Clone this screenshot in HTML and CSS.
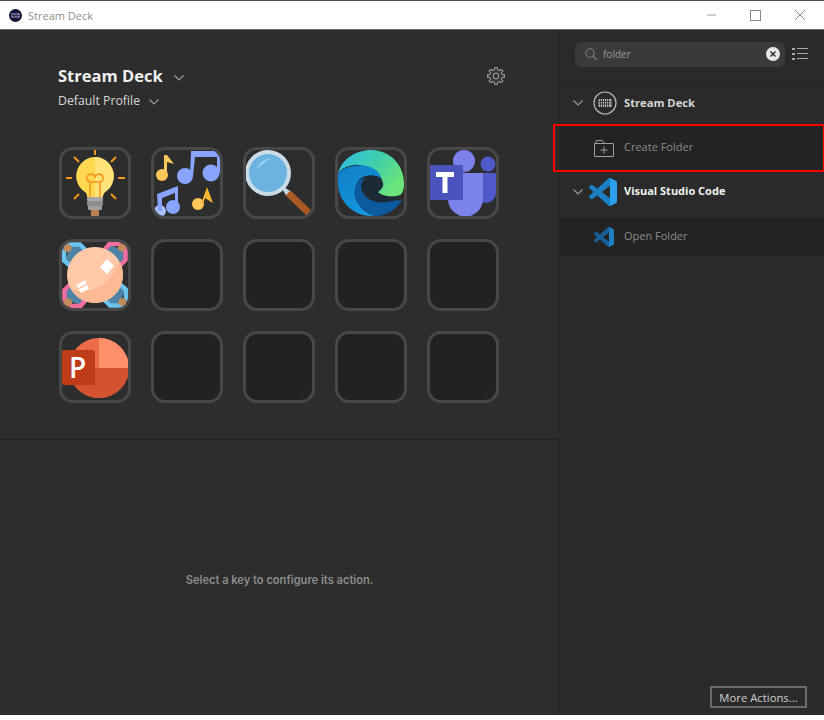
FILE: index.html
```html
<!DOCTYPE html>
<html lang="en">
  <head>
    <meta charset="UTF-8" />
    <title>Stream Deck</title>
    <link rel="stylesheet" href="styles.css">
  </head>
  <body>
    <div class="window">
      <div class="titlebar">
        <svg class="app-logo" width="13" height="13" viewBox="0 0 14 14">
          <circle cx="7" cy="7" r="7" fill="#14143a"/>
          <rect x="2.5" y="4.5" width="9" height="5" fill="#8a8fa8"/>
          <path d="M4.500 4.500v5M6.500 4.500v5M8.500 4.500v5M2.500 7h9" stroke="#14143a" stroke-width=".7"/>
        </svg>
        <span class="title-text">Stream Deck</span>
        <div class="win-btns">
          <svg width="14" height="14" viewBox="0 0 14 14"><path d="M4 7h9" stroke="#9a9a9a"/></svg>
          <svg width="14" height="14" viewBox="0 0 14 14"><rect x="2.5" y="2.5" width="10" height="10" fill="none" stroke="#8a8a8a"/></svg>
          <svg width="14" height="14" viewBox="0 0 14 14"><path d="M2 2l10 10M12 2L2 12" stroke="#8a8a8a"/></svg>
        </div>
      </div>

      <div class="main">
        <div class="left">
          <div class="canvas-area">
            <div class="device-head">
              <div>
                <div class="device-name">Stream Deck
                  <svg class="chev" width="10" height="6" viewBox="0 0 10 6"><path d="M.5 .5L5 5 9.500 .5"/></svg>
                </div>
                <div class="profile-name">Default Profile
                  <svg class="chev" width="10" height="6" viewBox="0 0 10 6"><path d="M.5 .5L5 5 9.500 .5"/></svg>
                </div>
              </div>
              <svg class="gear" width="18" height="18" viewBox="0 0 18 18" fill="none" stroke="#8f8f8f" stroke-width="1.300" stroke-linejoin="round">
                <defs><path id="gearTooth" d="M14.820 6.590L15.140 7.580 17.400 7.670V10.330L15.140 10.420 14.820 11.410"/></defs>
                <use href="#gearTooth"/>
                <use href="#gearTooth" transform="rotate(45 9 9)"/>
                <use href="#gearTooth" transform="rotate(90 9 9)"/>
                <use href="#gearTooth" transform="rotate(135 9 9)"/>
                <use href="#gearTooth" transform="rotate(180 9 9)"/>
                <use href="#gearTooth" transform="rotate(225 9 9)"/>
                <use href="#gearTooth" transform="rotate(270 9 9)"/>
                <use href="#gearTooth" transform="rotate(315 9 9)"/>
                <circle cx="9" cy="9" r="2.800"/>
              </svg>
            </div>

            <div class="keys">
              <!-- lamp -->
              <div class="key">
                <svg viewBox="0 0 66 66">
                  <path d="M33 0v5M12 7l5 5M54 7l-5 5M4 28h6M56 28h7M12 49l5-5M54 49l-5-5" stroke="#f7971e" stroke-width="2"/>
                  <path d="M33 7a19 19 0 0 0-10 35c2 2 2 3 2 5h16c0-2 0-3 2-5a19 19 0 0 0-10-35z" fill="#ffd84f"/>
                  <path d="M33 7a19 19 0 0 1 10 35c-2 2-2 3-2 5h-8z" fill="#ffe27a"/>
                  <path d="M28 47V32a4 4 0 1 1 5-4 4 4 0 1 1 5 4v15M28 32h10" fill="none" stroke="#f7971e" stroke-width="1.600"/>
                  <rect x="25" y="47" width="16" height="4" rx="1" fill="#a8a8a8"/>
                  <rect x="25" y="51" width="16" height="5" rx="1" fill="#8c8c8c"/>
                  <rect x="26" y="56" width="14" height="4" rx="1" fill="#a0a0a0"/>
                  <rect x="29" y="60" width="8" height="6" fill="#b98355"/>
                </svg>
              </div>
              <!-- music -->
              <div class="key">
                <svg viewBox="0 0 66 66">
                  <g fill="#ffc75a">
                    <circle cx="8" cy="25" r="6"/>
                    <path d="M10 5h3l7 9-7-2v13h-3z"/>
                    <circle cx="44" cy="54" r="6"/>
                    <path d="M47 54l6-17 6 16-5-3-3-2-2 6z" fill="#f7b733"/>
                  </g>
                  <g fill="#88a4ff">
                    <circle cx="31" cy="26" r="8"/>
                    <circle cx="57" cy="23" r="8.500"/>
                    <path d="M37 1h29v22h-3V7H41l-2 19h-3z"/>
                    <circle cx="6" cy="61" r="6" fill="#a8c0ff"/>
                    <circle cx="19" cy="57" r="7"/>
                    <path d="M3 44l21-8v20h-3V43L8 48v13H4z"/>
                  </g>
                </svg>
              </div>
              <!-- magnifier -->
              <div class="key">
                <svg viewBox="0 0 66 66">
                  <path d="M39 45l22 21 5-5-22-21z" fill="#a85a22"/>
                  <path d="M36 39l4 6 4-4-6-4z" fill="#c5d8e6"/>
                  <circle cx="22" cy="23" r="21" fill="#6cb3e2" stroke="#c9dce8" stroke-width="4"/>
                  <path d="M11 19c2-6 7-10 14-11-5 3-10 7-14 11z" fill="#a3d2ee"/>
                </svg>
              </div>
              <!-- edge -->
              <div class="key">
                <svg viewBox="0 0 66 66">
                  <defs>
                    <linearGradient id="edgeTop" x1="0" y1="0" x2="1" y2=".6"><stop offset="0" stop-color="#2ebde8"/><stop offset=".55" stop-color="#3fcfa8"/><stop offset="1" stop-color="#6ee57a"/></linearGradient>
                    <linearGradient id="edgeBlue" x1="0" y1="0" x2=".6" y2="1"><stop offset="0" stop-color="#0f7cc4"/><stop offset="1" stop-color="#1599e0"/></linearGradient>
                  </defs>
                  <circle cx="33" cy="33" r="32" fill="#1c2a36"/>
                  <path d="M0 23C4 9 18 0 33 0c19 0 33 15 33 33 0 6-1 10-4 12-5 2-17 2-22-3 3-2 6-5 5-9-2-10-12-17-24-18C13 14 4 18 0 23z" fill="url(#edgeTop)"/>
                  <path d="M0 23c10-9 30-11 40-1 2 2 3 4 3 6-4-3-12-4-18-1-6 3-9 11-8 19 2 9 9 17 20 20h-4C15 66 0 51 0 33c0-3 0-7 0-10z" fill="url(#edgeBlue)"/>
                  <path d="M17 46c-2-10 3-17 11-18-6 4-6 10-3 15 4 7 14 11 24 9 6-1 11-2 15-2-6 10-16 16-27 16C27 63 19 55 17 46z" fill="#0d5a9e"/>
                </svg>
              </div>
              <!-- teams -->
              <div class="key">
                <svg viewBox="0 0 66 66">
                  <circle cx="34" cy="11" r="11" fill="#7b83eb"/>
                  <circle cx="58" cy="14" r="7.500" fill="#5059c9"/>
                  <path d="M50 23h16v20a10 10 0 0 1-14 9z" fill="#5059c9"/>
                  <path d="M18 23h35v26a17.500 17.500 0 0 1-35 0z" fill="#7b83eb"/>
                  <path d="M18 50h15V20H18z" fill="#5c63c8"/>
                  <rect x="0" y="15" width="33" height="35" fill="#4b53bc"/>
                  <path d="M6 22h18v5h-6.500v16h-5V27H6z" fill="#fff"/>
                </svg>
              </div>

              <!-- meeting table -->
              <div class="key">
                <svg viewBox="0 0 66 66">
                  <defs>
                    <g id="person">
                      <path d="M8 5l11-2 9 9-16 15-9-9z" fill="#4f83a6" stroke="none"/>
                      <path d="M4 2.500h14l5 5M2 9v9.500L12 27" fill="none" stroke-width="4.500" stroke-linecap="round" stroke-linejoin="round"/>
                      <circle cx="5.500" cy="6" r="4" fill="#c08a5c" stroke="none"/>
                    </g>
                  </defs>
                  <use href="#person" stroke="#6cc4ef"/>
                  <use href="#person" stroke="#f26da0" transform="rotate(90 33 33)"/>
                  <use href="#person" stroke="#6cc4ef" transform="rotate(180 33 33)"/>
                  <use href="#person" stroke="#f26da0" transform="rotate(270 33 33)"/>
                  <circle cx="33" cy="33" r="28" fill="#ffc9a8"/>
                  <path d="M57 19a28 28 0 0 1-24 42C23 61 14 56 9 47c20 7 42-6 48-28z" fill="#fcb994"/>
                  <path d="M38 25l7-8 7 7-7 8z" fill="#fff"/>
                  <path d="M14 43l9-5 4 9-8 4z" fill="#fff"/>
                  <path d="M16 47l9-5" stroke="#fcb994" stroke-width="1.200"/>
                </svg>
              </div>
              <div class="key empty"></div>
              <div class="key empty"></div>
              <div class="key empty"></div>
              <div class="key empty"></div>

              <!-- powerpoint -->
              <div class="key">
                <svg viewBox="0 0 66 66">
                  <circle cx="37" cy="34" r="30" fill="#ed6c47"/>
                  <path d="M37 4a30 30 0 0 1 30 30H37z" fill="#ff8f6b"/>
                  <path d="M37 34h30a30 30 0 0 1-60 0z" fill="#d35230"/>
                  <rect x="0" y="16" width="33" height="35" rx="2" fill="#c03b18"/>
                  <text x="7" y="44" class="ppt-letter">P</text>
                </svg>
              </div>
              <div class="key empty"></div>
              <div class="key empty"></div>
              <div class="key empty"></div>
              <div class="key empty"></div>
            </div>
          </div>
          <div class="inspector">
            <p class="hint">Select a key to configure its action.</p>
          </div>
        </div>

        <div class="sidebar">
          <div class="search-row">
            <div class="search">
              <svg width="14" height="14" viewBox="0 0 14 14" fill="none" stroke="#808080" stroke-width="1.100"><circle cx="6" cy="6" r="4.200"/><path d="M9 9l4 4"/></svg>
              <span class="search-text">folder</span>
              <svg class="search-clear" width="14" height="14" viewBox="0 0 14 14"><circle cx="7" cy="7" r="7" fill="#e8e8e8"/><path d="M4.500 4.500l5 5M9.500 4.500l-5 5" stroke="#333" stroke-width="1.500"/></svg>
            </div>
            <svg width="16" height="14" viewBox="0 0 16 14" fill="#a8a8a8"><rect x="0" y="1" width="3" height="2"/><rect x="0" y="6" width="3" height="2"/><rect x="0" y="11" width="3" height="2"/><rect x="5" y="1" width="11" height="1"/><rect x="5" y="6" width="11" height="1"/><rect x="5" y="11" width="11" height="1"/></svg>
          </div>

          <div class="group-row">
            <svg class="chev" width="10" height="6" viewBox="0 0 10 6"><path d="M.5 .5L5 5 9.500 .5"/></svg>
            <svg class="group-icon" width="24" height="24" viewBox="0 0 24 24">
              <circle cx="12" cy="12" r="11" fill="none" stroke="#b8b8b8" stroke-width="1.200"/>
              <rect x="5.500" y="8" width="13" height="8" rx="1" fill="#b8b8b8"/>
              <path d="M7.500 8v8M9.500 8v8M11.500 8v8M13.500 8v8M15.500 8v8M5.500 10.500h13M5.500 13h13" stroke="#2a2a2a" stroke-width=".8"/>
            </svg>
            <span class="group-name">Stream Deck</span>
          </div>
          <div class="action-row boxed">
            <svg class="action-icon" width="20" height="17" viewBox="0 0 20 17" fill="none" stroke="#a0a0a0"><path d="M.5 3.500h19v13H.5z"/><path d="M1.500 3.500l1-3h6l2 3"/><path d="M6.500 10h7M10 6.500v7"/></svg>
            <span class="action-name">Create Folder</span>
          </div>
          <div class="group-row tall">
            <svg class="chev" width="10" height="6" viewBox="0 0 10 6"><path d="M.5 .5L5 5 9.500 .5"/></svg>
            <svg class="vscode-big" width="28" height="28" viewBox="0 0 100 100">
              <path d="M96.460 10.800L75.860.870a6.230 6.230 0 0 0-7.100 1.200L29.300 38.100 12.100 25.060a4.160 4.160 0 0 0-5.320.240L1.270 30.300a4.170 4.170 0 0 0 0 6.160L16.180 50 1.270 63.540a4.170 4.170 0 0 0 0 6.160l5.500 5a4.160 4.160 0 0 0 5.320.240L29.300 61.900l39.470 36.030a6.220 6.220 0 0 0 7.090 1.200l20.600-9.920A6.250 6.250 0 0 0 100 83.580V16.420a6.250 6.250 0 0 0-3.540-5.630zM75 72.700L45.050 50 75 27.300z" fill="#1b7fc4"/>
              <path d="M75 .4L96.460 10.800A6.250 6.250 0 0 1 100 16.420v67.160a6.250 6.250 0 0 1-3.540 5.630L75 99.600z" fill="#2a9fee"/>
            </svg>
            <span class="group-name bright">Visual Studio Code</span>
          </div>
          <div class="action-row">
            <svg class="action-icon" width="20" height="20" viewBox="0 0 100 100">
              <path d="M96.460 10.800L75.860.870a6.230 6.230 0 0 0-7.100 1.200L29.300 38.100 12.100 25.060a4.160 4.160 0 0 0-5.320.240L1.270 30.300a4.170 4.170 0 0 0 0 6.160L16.180 50 1.270 63.540a4.170 4.170 0 0 0 0 6.160l5.500 5a4.160 4.160 0 0 0 5.320.240L29.300 61.900l39.470 36.030a6.220 6.220 0 0 0 7.090 1.200l20.600-9.920A6.250 6.250 0 0 0 100 83.580V16.420a6.250 6.250 0 0 0-3.540-5.630zM75 72.700L45.050 50 75 27.300z" fill="#17609a"/>
              <path d="M75 .4L96.460 10.800A6.250 6.250 0 0 1 100 16.420v67.160a6.250 6.250 0 0 1-3.540 5.630L75 99.600z" fill="#1f7fc0"/>
            </svg>
            <span class="action-name">Open Folder</span>
          </div>
          <div class="sidebar-foot">
            <button class="more-btn">More Actions...</button>
          </div>
        </div>
      </div>
    </div>
  </body>
</html>
```

FILE: styles.css
```css
html,
body {
  margin: 0;
  height: 100%;
  background: #fff;
}
body {
  font-family: "Open Sans", "Noto Sans", sans-serif;
  overflow: hidden;
}
.window {
  width: 824px;
  height: 715px;
  display: flex;
  flex-direction: column;
}
.titlebar {
  height: 30px;
  flex: none;
  box-sizing: border-box;
  display: flex;
  align-items: center;
  padding-left: 9px;
  background: #fff;
  border-top: 1px solid #4c4c4c;
  border-bottom: 1px solid #6a6a6a;
}
.title-text {
  margin-left: 6px;
  font-size: 11px;
  color: #8f8f8f;
}
.win-btns {
  margin-left: auto;
  display: flex;
  gap: 31px;
  padding-right: 17px;
}
.main {
  flex: 1;
  display: flex;
  min-height: 0;
}
.left {
  width: 560px;
  flex: none;
  display: flex;
  flex-direction: column;
  background: #2d2d2d;
  border-right: 1px solid #262626;
  box-sizing: border-box;
}
.canvas-area {
  height: 410px;
  flex: none;
  box-sizing: border-box;
  padding: 34px 54px 0 58px;
  border-bottom: 1px solid #222;
}
.device-head {
  display: flex;
  justify-content: space-between;
  align-items: flex-start;
}
.device-name {
  font-size: 16.500px;
  font-weight: 700;
  line-height: 24px;
  color: #f0f0f0;
}
.device-name .chev {
  margin-left: 7px;
}
.profile-name {
  margin-top: 3px;
  font-size: 12.300px;
  line-height: 20px;
  color: #d8d8d8;
}
.chev {
  fill: none;
  stroke: #a0a0a0;
  stroke-width: 1.100;
  margin-left: 6px;
  vertical-align: middle;
}
.gear {
  margin-top: 3px;
}
.keys {
  margin-top: 36px;
  display: grid;
  grid-template-columns: repeat(5, 72px);
  grid-auto-rows: 72px;
  gap: 20px;
  margin-left: 1px;
}
.key {
  box-sizing: border-box;
  width: 72px;
  height: 72px;
  border: 3px solid #484848;
  border-radius: 14px;
  background: #2d2d2d;
  overflow: hidden;
}
.key svg {
  display: block;
  width: 100%;
  height: 100%;
}
.key.empty {
  background: #222;
}
.ppt-letter {
  font-family: "Open Sans", sans-serif;
  font-size: 28px;
  font-weight: 600;
  fill: #fff;
}
.inspector {
  flex: 1;
  display: flex;
  align-items: flex-start;
  justify-content: center;
}
.hint {
  margin: 133px 0 0;
  font-family: Inter, sans-serif;
  font-size: 11.100px;
  font-weight: 600;
  color: #8c8c8c;
}
.sidebar {
  flex: 1;
  display: flex;
  flex-direction: column;
  background: #2a2a2a;
}
.search-row {
  height: 51px;
  flex: none;
  box-sizing: border-box;
  display: flex;
  align-items: center;
  gap: 7px;
  padding: 0 16px 2px 15px;
  border-bottom: 1px solid #262626;
}
.search {
  flex: 1;
  height: 25px;
  display: flex;
  align-items: center;
  padding: 0 5px 0 9px;
  background: #3a3a3a;
  border-radius: 6px;
}
.search-text {
  margin-left: 5px;
  font-size: 10px;
  color: #9a9a9a;
}
.search-clear {
  margin-left: auto;
}
.group-row {
  height: 44px;
  flex: none;
  box-sizing: border-box;
  display: flex;
  align-items: center;
  padding-left: 13px;
}
.group-row.tall {
  height: 46px;
  padding-bottom: 5px;
}
.group-row .chev {
  margin-left: 0;
}
.group-icon {
  margin-left: 10px;
}
.vscode-big {
  margin-left: 6px;
}
.group-name {
  margin: 0 0 2px 7px;
  font-size: 11.200px;
  font-weight: 700;
  color: #d5d5d5;
}
.group-name.bright {
  font-size: 11px;
  color: #f2f2f2;
}
.action-row {
  height: 39px;
  flex: none;
  display: flex;
  align-items: center;
  padding-left: 34px;
  background: #232323;
}
.action-row.boxed {
  height: 46px;
  position: relative;
}
.action-row.boxed::after {
  content: "";
  position: absolute;
  inset: -1px 0 -1px -7px;
  border: 2px solid #f00;
  border-right-width: 1px;
}
.action-name {
  margin: 0 0 3px 10px;
  font-size: 11px;
  color: #8a8a8a;
}
.sidebar-foot {
  margin-top: auto;
  display: flex;
  justify-content: flex-end;
  padding: 0 17px 7px 0;
}
.more-btn {
  width: 97px;
  height: 22px;
  padding: 0;
  background: #2a2a2a;
  border: 2px solid #6a6a6a;
  font-family: "Open Sans", sans-serif;
  font-size: 11.300px;
  color: #d0d0d0;
}
```
